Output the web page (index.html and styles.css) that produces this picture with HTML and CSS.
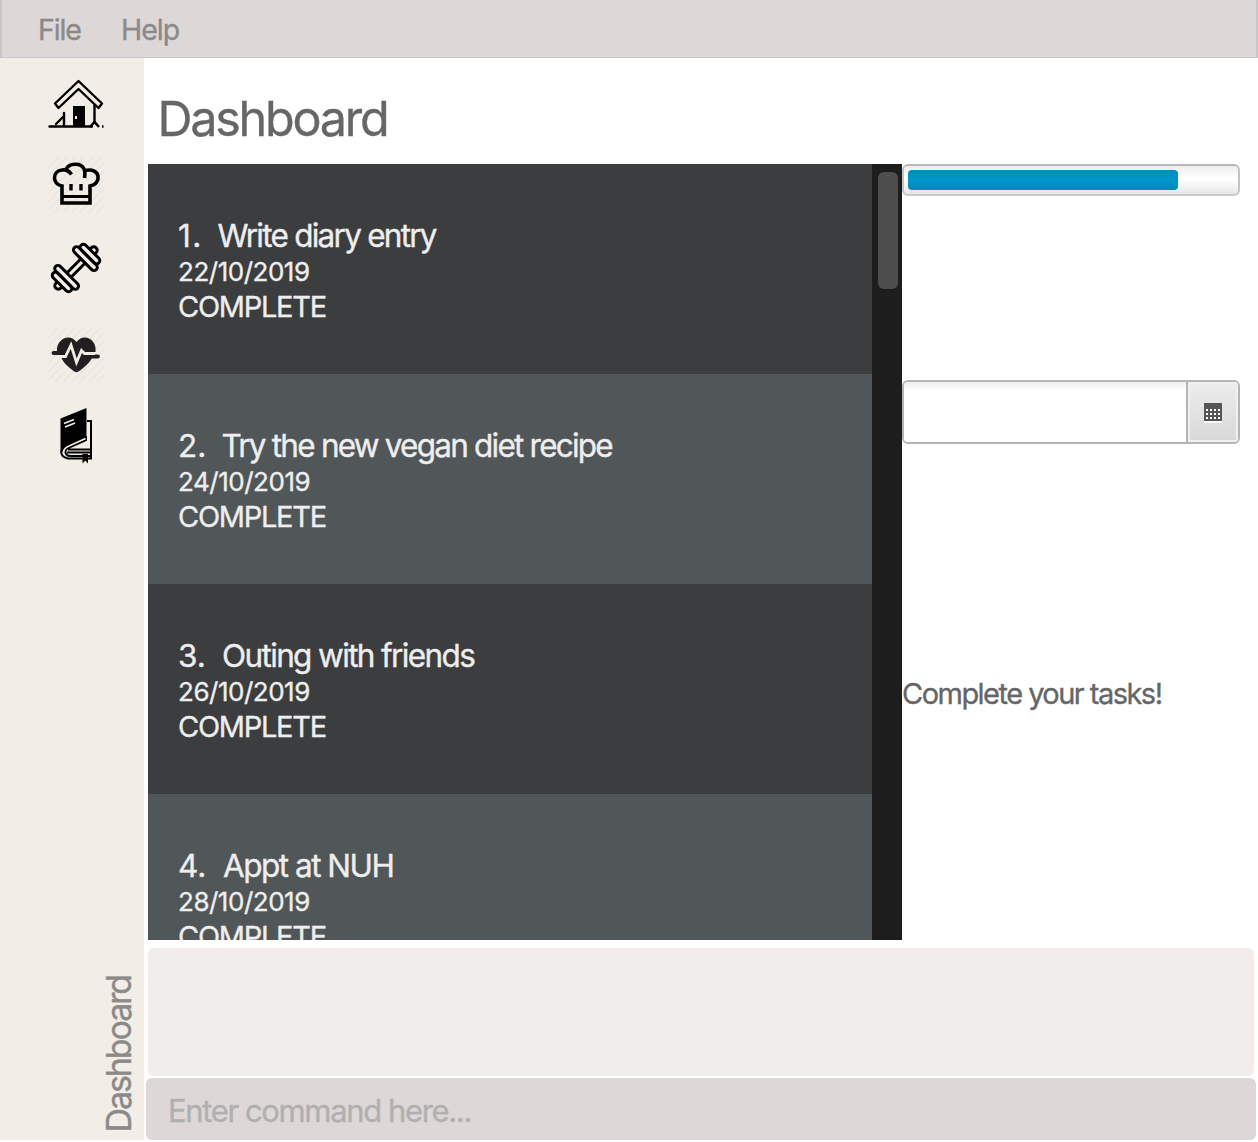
FILE: index.html
```
<!DOCTYPE html>
<html lang="en">
<head>
<meta charset="utf-8">
<title>Dashboard</title>
<link rel="stylesheet" href="styles.css">
</head>
<body>
<div class="app">
  <header class="menubar"><span class="menu menu-file">File</span><span class="menu menu-help">Help</span></header>
  <div class="body">
    <nav class="sidebar">
      <div class="icons">
        <svg class="icon" viewBox="0 0 75 70" fill="none" stroke="#000" stroke-width="2.400">
          <path d="M38.500 11 62 33.500 58.500 38 38.500 19 18.500 38 15 33.500Z" stroke-linejoin="round"/>
          <path d="M54.500 35V52M9.500 56.500H52M16 54 23 47M24 43V56" stroke-linecap="round"/>
          <path d="M50 57 54.500 52 59 57M62 56.500H63.500" stroke-width="2.600"/>
          <path d="M33 36H45V56H33Z" fill="#000" stroke="none"/><path d="M35 46H37V49H35Z" fill="#f2ede6" stroke="none"/>
        </svg>
        <svg class="icon hatch" viewBox="0 0 75 70" fill="none" stroke="#000" stroke-width="3.600">
          <path d="M45 20.500C61 17 62 34 50 36V53H22V36C12 34 12 21 22 20Q28 19 31.500 24.500M25.500 20C29 12.500 41 12.500 44 19Q45.500 22 44.500 28"/>
          <path d="M22 46.500H50" stroke-width="3"/>
          <path d="M31 34V40.500M41 34V40.500" stroke-width="3.400"/>
        </svg>
        <svg class="icon" viewBox="0 0 75 70" fill="none" stroke="#000" stroke-width="3">
          <g transform="translate(36 33) rotate(-45)">
            <path d="M-10-3H10M-10 3H10"/>
            <rect x="-16.500" y="-15.500" width="6.500" height="31" rx="3.250"/>
            <rect x="-23" y="-12.500" width="6.500" height="25" rx="3.250"/>
            <rect x="10" y="-15.500" width="6.500" height="31" rx="3.250"/>
            <rect x="16.500" y="-12.500" width="6.500" height="25" rx="3.250"/>
            <path d="M-23-3.500H-25A3.500 3.500 0 0 0-25 3.500H-23M23-3.500H25A3.500 3.500 0 0 1 25 3.500H23"/>
          </g>
        </svg>
        <svg class="icon hatch" viewBox="0 0 75 70">
          <path d="M17 31C16 20 29 12 36.500 22C44 12 57 20 55.500 31V32H50V38H52C49 44 42 49 38.500 51.500Q36 53 33.500 51C29 47 24 44 21.500 38H22V31Z" fill="#231f20"/>
          <path d="M13.500 33H25M41 36.500H58" stroke="#231f20" stroke-width="3.800" stroke-linecap="round"/>
          <path d="M20.500 36.500H25.500L31 25 36.500 42.500 41.500 30.500 44.500 33.500H55" fill="none" stroke="#f2ede6" stroke-width="2.800"/>
        </svg>
        <svg class="icon" viewBox="0 0 75 70" fill="none" stroke="#000" stroke-width="2">
          <path d="M20.500 18.500 46.500 8V38.500L27 48Q21.500 51 21 55L20.500 50Z" fill="#000" stroke="none"/>
          <path d="M24 23.500 34 19.500M25 27 35 23" stroke="#f2ede6" stroke-width="1.600"/>
          <path d="M47 21H51V58.500H28Q20 57 21.500 50M46 36V40L28 48Q24 50 26 54Q27 56 30 56H50M28 49.500H51M27 52.500H51"/>
          <path d="M23.500 52Q24 48 29 46L45.500 38.500" stroke="#f2ede6" stroke-width="1.600"/>
          <path d="M42.500 54H48V63.500L45.250 60.500 42.500 63.500Z" fill="#000" stroke="none"/>
        </svg>
      </div>
      <div class="tab-name">Dashboard</div>
    </nav>
    <main class="main">
      <h1 class="title">Dashboard</h1>
      <div class="content">
        <div class="list">
          <div class="tasks">
            <article class="task"><div class="name"><span class="num n1">1.</span><span class="t1">Write diary entry</span></div><div class="date">22/10/2019</div><div class="status">COMPLETE</div></article>
            <article class="task alt"><div class="name"><span class="num n2">2.</span><span class="t2">Try the new vegan diet recipe</span></div><div class="date">24/10/2019</div><div class="status">COMPLETE</div></article>
            <article class="task"><div class="name"><span class="num n3">3.</span><span class="t3">Outing with friends</span></div><div class="date">26/10/2019</div><div class="status">COMPLETE</div></article>
            <article class="task alt"><div class="name"><span class="num n4">4.</span><span class="t4">Appt at NUH</span></div><div class="date">28/10/2019</div><div class="status">COMPLETE</div></article>
          </div>
          <div class="scrollbar"><div class="thumb"></div></div>
        </div>
        <aside class="side">
          <div class="progress"><div class="bar"></div></div>
          <div class="picker">
            <div class="field"></div>
            <div class="pick"><svg class="cal" viewBox="0 0 18 20"><path d="M0 18H18V20H0Z" fill="#fff"/><path d="M0 0H18V18H0Z" fill="#555"/><path d="M2 7H16M2 11H16M2 15H16" stroke="#fff" stroke-width="2" stroke-dasharray="2 2"/></svg></div>
          </div>
          <div class="message">Complete your tasks!</div>
        </aside>
      </div>
      <div class="result"></div>
      <div class="command"><span class="prompt">Enter command here...</span></div>
    </main>
  </div>
</div>
</body>
</html>
```
FILE: styles.css
```
* { box-sizing: border-box; }
body { margin: 0; background: #fff; font-family: Inter, "Liberation Sans", sans-serif; color: #666; white-space: nowrap; -webkit-text-stroke: 0.35px currentColor; }
.app { width: 1258px; height: 1142px; display: flex; flex-direction: column; overflow: hidden; }
.menubar { height: 58px; flex: none; display: flex; gap: 40px; padding: 0 0 0 36px; background: #ddd7d7; border: 2px solid #c8c6c6; border-width: 0 2px 1px; font-size: 28.500px; line-height: 60px; color: #8b8a89; }
.menu-file { width: 43px; letter-spacing: -1.1px; }
.menu-help { letter-spacing: -1px; }
.body { height: 1082px; display: flex; }
.sidebar { width: 144px; flex: none; background: #f2ede6; display: flex; flex-direction: column; justify-content: space-between; align-items: flex-end; padding: 12px 0 8px 40px; }
.icons { width: 104px; display: grid; grid-template-rows: 80px 85px 85px 80px 70px; }
.icon { width: 75px; height: 70px; }
.hatch { background: repeating-linear-gradient(135deg, #ece8e1 0 2px, #f2ede6 2px 6px) 9px 7px / 55px 55px no-repeat; }
.tab-name { writing-mode: vertical-rl; transform: rotate(180deg); font-size: 34px; line-height: 42px; letter-spacing: -2.1px; color: #8b8a89; margin-right: 4px; }
.main { width: 1114px; display: flex; flex-direction: column; }
.title { margin: 0; height: 106px; padding-left: 13.500px; font-size: 48.500px; font-weight: 400; line-height: 122px; letter-spacing: -2.250px; }
.content { height: 776px; margin-left: 4px; display: flex; }
.list { width: 754px; height: 776px; display: flex; overflow: hidden; background: #1d1d1d; }
.tasks { width: 724px; }
.task { height: 210px; padding: 54px 30px 0; background: #3c3d3f; color: #eee; }
.task.alt { background: #515658; }
.name { font-size: 31.500px; line-height: 36px; height: 36px; display: flex; }
.t1 { letter-spacing: -1.750px; }
.t2 { letter-spacing: -1.780px; }
.t3 { letter-spacing: -1.630px; }
.t4 { letter-spacing: -1.500px; }
.num { width: 39.500px; letter-spacing: 0; }
.n1 { letter-spacing: 1.500px; }
.n2 { width: 43.500px; }
.n3 { width: 44px; }
.n4 { width: 45px; }
.date { font-size: 26px; line-height: 36px; height: 35px; letter-spacing: -0.480px; }
.status { font-size: 29px; line-height: 36px; letter-spacing: -1.280px; }
.scrollbar { width: 30px; padding: 8px 4px 0 6px; }
.thumb { height: 117px; border-radius: 6px; background: #4d4d4d; }
.side { width: 338px; }
.progress { height: 32px; padding: 4px; border: 2px solid #bdbdbd; border-color: #b8b8b8 #c3c3c3 #cbcbcb; border-radius: 6px; background: linear-gradient(#ececec, #fff 40%, #fff 50%, #e6e6e6); }
.bar { width: 270px; height: 20px; border-radius: 4px; background: linear-gradient(#008bb9, #0096c9 40%, #0096c9 60%, #0088b5); }
.picker { height: 64px; margin-top: 184px; display: flex; border: 2px solid #b5b5b5; border-radius: 6px; background: #fff; overflow: hidden; }
.field { width: 282px; background: linear-gradient(#eee, #fff 8px); }
.pick { flex: 1; display: flex; align-items: center; justify-content: center; border-left: 2px solid #b5b5b5; background: linear-gradient(#ededed, #d8d8d8); box-shadow: inset 0 0 0 2px #f0f0f0; }
.cal { width: 18px; height: 20px; margin: 2px 1px 0 0; }
.message { margin-top: 232px; font-size: 29px; line-height: 36px; letter-spacing: -1.530px; }
.result { height: 128px; margin: 8px 4px 0; border-radius: 6px; background: #f1edea; }
.command { width: 1110px; height: 62px; margin: 2px 0 0 2px; padding-left: 22px; border-radius: 6px; background: #ddd7d7; font-size: 31px; line-height: 66px; letter-spacing: -1.370px; color: #b1b0b0; }
```
